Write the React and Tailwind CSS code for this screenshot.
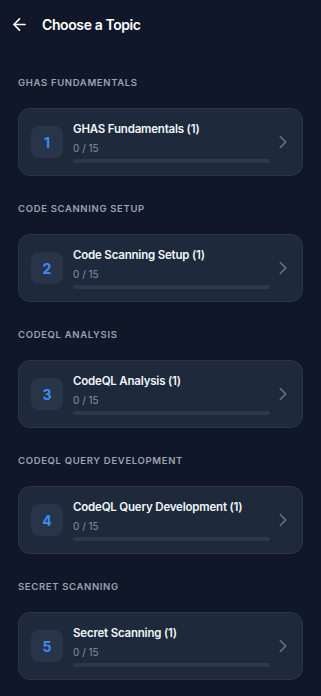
import { ArrowLeft, ChevronRight } from 'lucide-react';

const topics = [
  { id: 1, section: 'GHAS Fundamentals', title: 'GHAS Fundamentals (1)', done: 0, total: 15 },
  { id: 2, section: 'Code Scanning Setup', title: 'Code Scanning Setup (1)', done: 0, total: 15 },
  { id: 3, section: 'CodeQL Analysis', title: 'CodeQL Analysis (1)', done: 0, total: 15 },
  { id: 4, section: 'CodeQL Query Development', title: 'CodeQL Query Development (1)', done: 0, total: 15 },
  { id: 5, section: 'Secret Scanning', title: 'Secret Scanning (1)', done: 0, total: 15 },
];

function TopicCard({ topic }) {
  return (
    <div className="flex items-center h-[68px] rounded-[12px] border border-[#2a3548] bg-[#1e293b] pl-[12px] pr-[8px]">
      <div className="w-[32px] h-[32px] rounded-[8px] bg-[#283548] flex items-center justify-center text-[14px] font-bold text-[#3b8cf5]">
        {topic.id}
      </div>
      <div className="flex-1 ml-[10px] mr-[2px]">
        <div className="text-[11.5px] font-semibold leading-[16px] tracking-[-0.2px] text-[#f1f5f9]">{topic.title}</div>
        <div className="text-[10px] leading-[12px] mt-[5px] text-[#8792a4]">{topic.done} / {topic.total}</div>
        <div className="mt-[5px] h-[4px] rounded-full bg-[#2c384b]">
          <div className="h-full rounded-full bg-[#3b82f6]" style={{ width: `${(topic.done / topic.total) * 100}%` }} />
        </div>
      </div>
      <ChevronRight size={22} strokeWidth={1.6} className="text-[#6b778a]" />
    </div>
  );
}

export default function App() {
  return (
    <div className="min-h-[696px] bg-[#0f1729]" style={{ fontFamily: 'Inter, "Noto Sans", sans-serif' }}>
      {/* header */}
      <div className="h-[48px] flex items-center pl-[10px]">
        <ArrowLeft size={19} strokeWidth={2.1} className="text-white" />
        <h1 className="ml-[13px] text-[14px] font-semibold tracking-[-0.4px] text-white">Choose a Topic</h1>
      </div>

      <div className="px-[18px] pt-[28px] flex flex-col gap-[26px]">
        {topics.map((topic) => (
          <div key={topic.id}>
            <div className="h-[14px] mb-[18px] text-[9.5px] leading-[14px] font-semibold tracking-[0.07em] uppercase text-[#9aa3b2]">
              {topic.section}
            </div>
            <TopicCard topic={topic} />
          </div>
        ))}
      </div>
    </div>
  );
}
